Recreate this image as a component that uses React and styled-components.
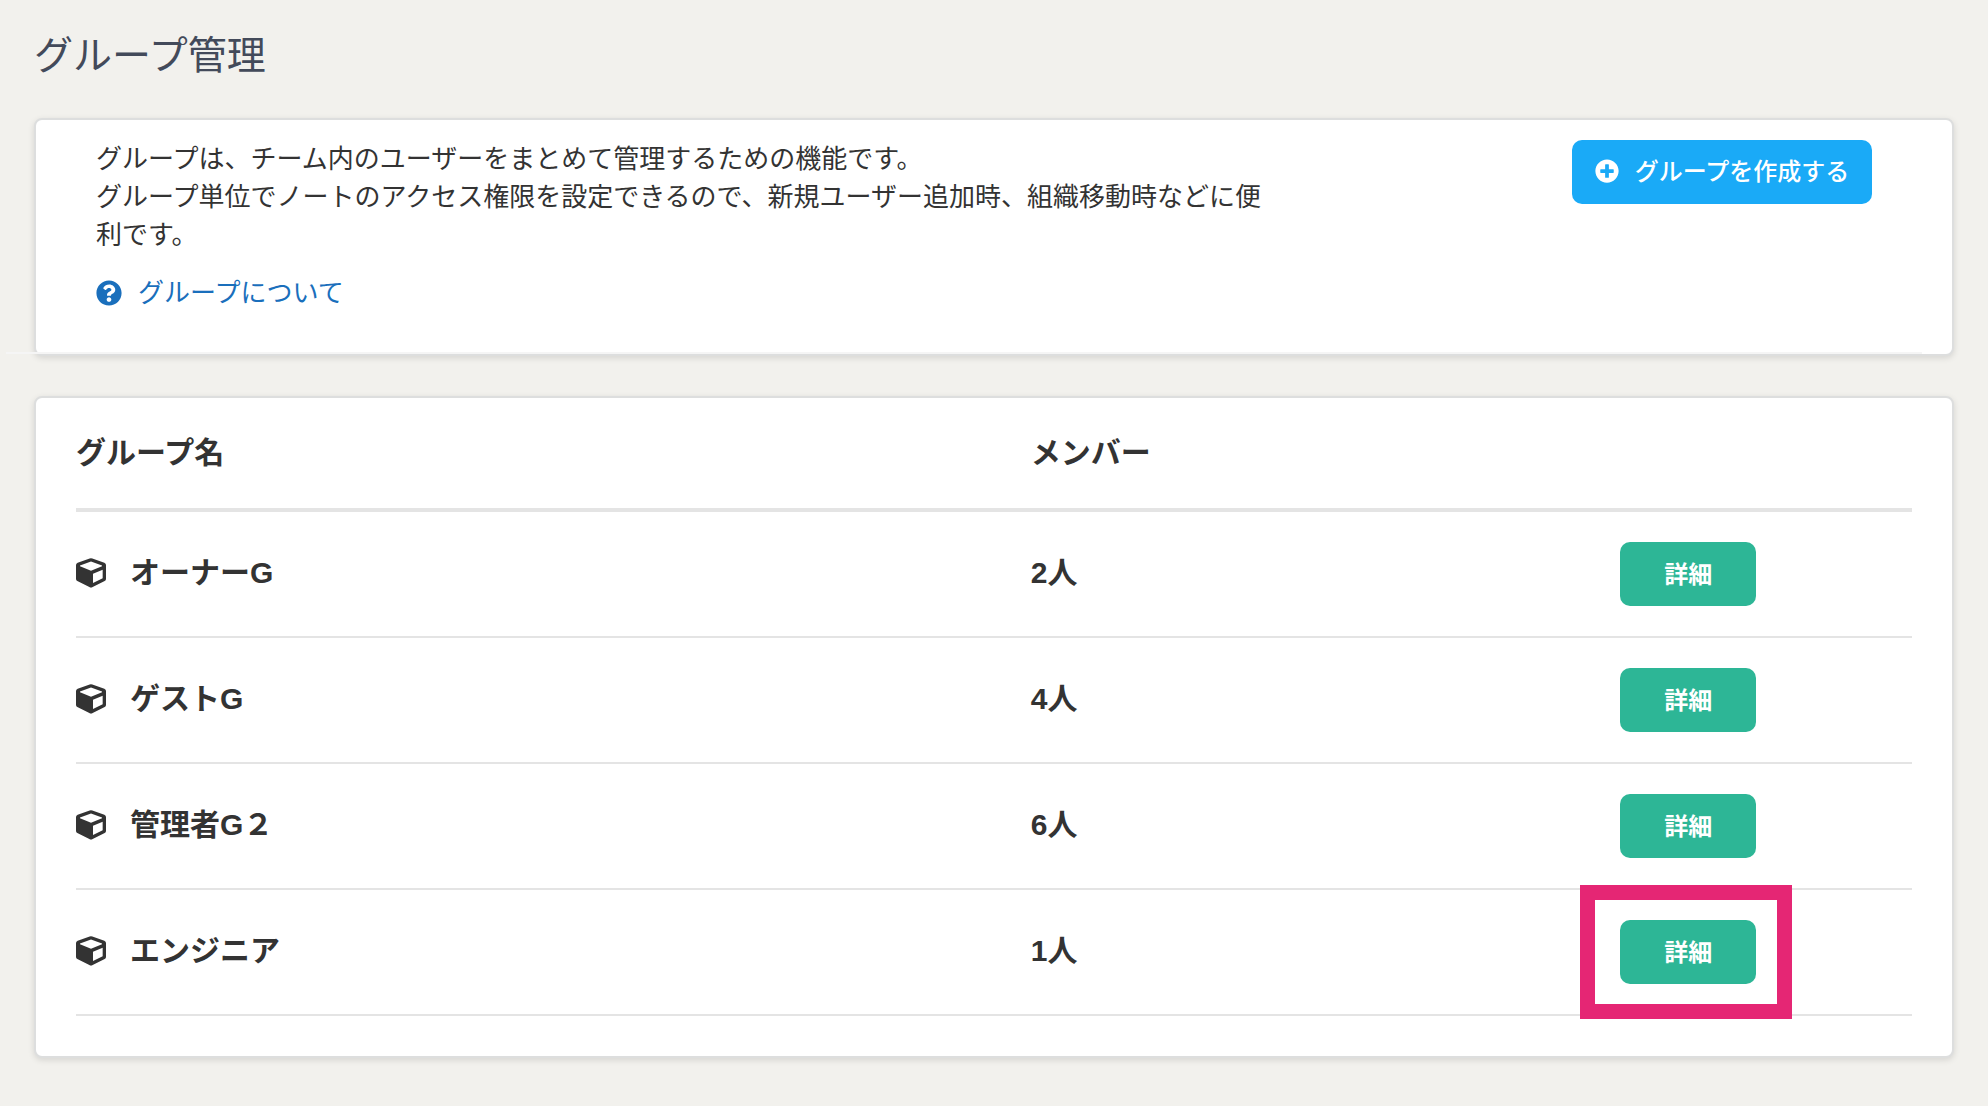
import React, { Fragment } from 'react';
import styled, { createGlobalStyle, css } from 'styled-components';
import { FaPlusCircle, FaQuestionCircle } from 'react-icons/fa';

const groups = [
	{ name: 'オーナーG', members: 2 },
	{ name: 'ゲストG', members: 4 },
	{ name: '管理者G２', members: 6 },
	{ name: 'エンジニア', members: 1, highlighted: true }
];

const CubeIcon = () => (
	<svg width='30' height='30' viewBox='0 0 90 90' fill='currentColor' aria-hidden='true'>
		<path
			fillRule='evenodd'
			d='M41 1.5Q45 0 49 1.5L85 14Q90 16 90 21V63Q90 67 86 69L50 87Q45 90 40 87L4 69Q0 67 0 63V21Q0 16 5 14ZM45 10.500L12 22.500V25L45 38.500L78 25V22.500ZM51 47.500V75L80 61V35.500Z'
		/>
	</svg>
);

const App = () => {
	return (
		<Fragment>
			<GlobalStyle />
			<Page>
				<PageTitle>グループ管理</PageTitle>
				<Card>
					<Intro>
						<IntroText>
							<p>
								グループは、チーム内のユーザーをまとめて管理するための機能です。
								<br />
								グループ単位でノートのアクセス権限を設定できるので、新規ユーザー追加時、組織移動時などに便利です。
							</p>
							<HelpLink href='#about'>
								<FaQuestionCircle />
								グループについて
							</HelpLink>
						</IntroText>
						<CreateButton type='button'>
							<FaPlusCircle />
							<span>グループを作成する</span>
						</CreateButton>
					</Intro>
					<Divider />
				</Card>
				<Card>
					<GroupTable>
						<colgroup>
							<col className='name' />
							<col className='members' />
							<col />
						</colgroup>
						<thead>
							<tr>
								<th scope='col'>グループ名</th>
								<th scope='col'>メンバー</th>
								<td />
							</tr>
						</thead>
						<tbody>
							{groups.map(group => (
								<tr key={group.name}>
									<td>
										<GroupName>
											<CubeIcon />
											{group.name}
										</GroupName>
									</td>
									<td>{group.members}人</td>
									<td>
										<DetailCell $highlighted={group.highlighted}>
											<DetailButton type='button' aria-label={`${group.name}の詳細`}>
												詳細
											</DetailButton>
										</DetailCell>
									</td>
								</tr>
							))}
						</tbody>
					</GroupTable>
				</Card>
			</Page>
		</Fragment>
	);
};

const textColor = '#333';
const linkColor = '#1a6fbc';
const lineColor = '#e4e4e4';
const highlightColor = '#e52674';

const GlobalStyle = createGlobalStyle`
	* {
		box-sizing: border-box;
	}

	body {
		margin: 0;
		background-color: #f2f1ed;
		color: ${textColor};
		font-family: 'Liberation Sans', 'Noto Sans CJK JP', sans-serif;
		font-size: 26px;
		line-height: 38px;
	}

	button {
		font-family: inherit;
		cursor: pointer;
	}
`;

const Page = styled.main`
	padding: 28px 34px 48px;
`;

const PageTitle = styled.h1`
	margin: 0 0 34px;
	color: #434a5a;
	font-size: 39px;
	font-weight: 400;
	line-height: 56px;
`;

const Card = styled.section`
	background-color: #fff;
	border: 2px solid #dddede;
	border-radius: 8px;
	box-shadow: 0 2px 6px rgba(0, 0, 0, 0.12);

	& + & {
		margin-top: 40px;
		padding: 0 40px 40px;
	}
`;

const Intro = styled.div`
	display: flex;
	justify-content: space-between;
	align-items: flex-start;
	padding: 20px 80px 40px 60px;
`;

const IntroText = styled.div`
	width: 66.66%;

	p {
		margin: 0 0 20px;
	}
`;

const HelpLink = styled.a`
	display: inline-flex;
	align-items: center;
	gap: 16px;
	color: ${linkColor};
	text-decoration: none;
	vertical-align: top;
`;

const CreateButton = styled.button`
	display: flex;
	align-items: center;
	justify-content: center;
	gap: 16px;
	width: 300px;
	height: 64px;
	padding: 0 0 2px;
	border: 0;
	border-radius: 10px;
	background-color: #1aaaf7;
	color: #fff;
	font-size: 24px;
	font-weight: 500;
	white-space: nowrap;

	span {
		padding-bottom: 4px;
	}
`;

const Divider = styled.hr`
	width: 100%;
	height: 2px;
	margin: 0 0 0 -30px;
	border: 0;
	background-color: #f5f5f5;
`;

const GroupTable = styled.table`
	width: 100%;
	table-layout: fixed;
	border-collapse: separate;
	border-spacing: 0;
	font-size: 30px;
	font-weight: 700;

	.name {
		width: 52%;
	}

	.members {
		width: 32%;
	}

	th {
		height: 114px;
		text-align: left;
	}

	th,
	td {
		padding: 0;
		vertical-align: middle;
	}

	thead th,
	thead td {
		border-bottom: 4px solid ${lineColor};
	}

	tbody td {
		height: 126px;
		padding-bottom: 2px;
		border-bottom: 2px solid ${lineColor};
	}

	tbody td:last-child {
		padding: 0 0 0 2px;
	}
`;

const GroupName = styled.div`
	display: flex;
	align-items: center;
	gap: 24px;
`;

const DetailCell = styled.div`
	display: flex;
	position: relative;
	width: 136px;

	${props =>
		props.$highlighted &&
		css`
			&::after {
				content: '';
				position: absolute;
				inset: -35px -36px -35px -40px;
				border: 15px solid ${highlightColor};
				pointer-events: none;
			}
		`};
`;

const DetailButton = styled.button`
	width: 136px;
	height: 64px;
	padding: 0 0 4px;
	border: 0;
	border-radius: 10px;
	background-color: #2db696;
	color: #fff;
	font-size: 24px;
	font-weight: 700;
`;

export default App;
